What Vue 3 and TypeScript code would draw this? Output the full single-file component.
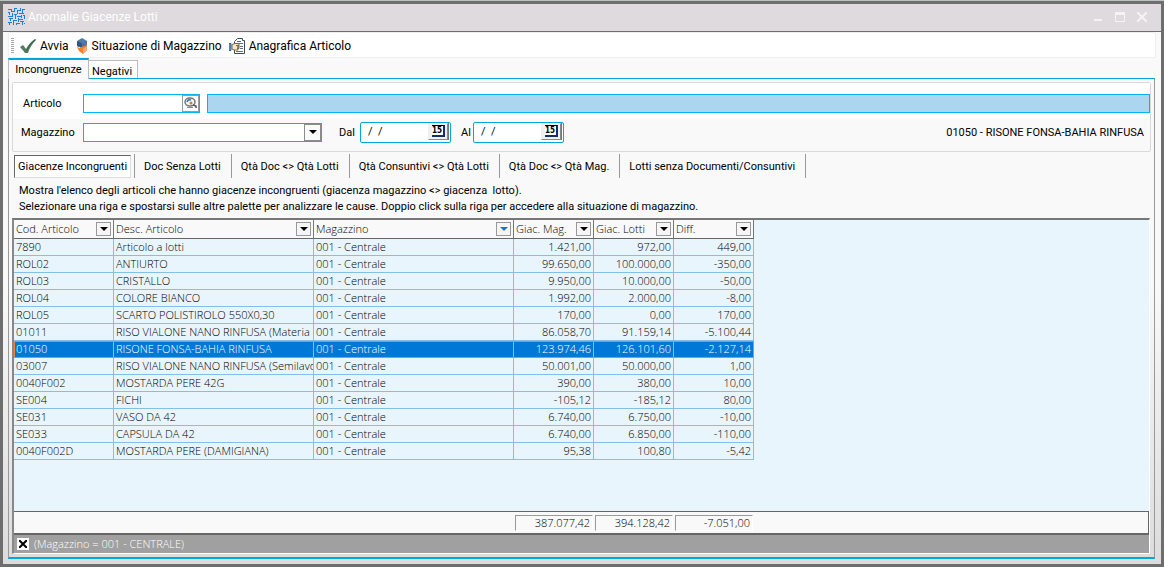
<script setup lang="ts">
import { ref } from 'vue'

interface Row {
  code: string
  desc: string
  store: string
  mag: string
  lots: string
  diff: string
}

const C = '001 - Centrale'
const make = (code: string, desc: string, mag: string, lots: string, diff: string): Row => ({ code, desc, store: C, mag, lots, diff })

const rows: Row[] = [
  make('7890', 'Articolo a lotti', '1.421,00', '972,00', '449,00'),
  make('ROL02', 'ANTIURTO', '99.650,00', '100.000,00', '-350,00'),
  make('ROL03', 'CRISTALLO', '9.950,00', '10.000,00', '-50,00'),
  make('ROL04', 'COLORE BIANCO', '1.992,00', '2.000,00', '-8,00'),
  make('ROL05', 'SCARTO POLISTIROLO 550X0,30', '170,00', '0,00', '170,00'),
  make('01011', 'RISO VIALONE NANO RINFUSA (Materia p', '86.058,70', '91.159,14', '-5.100,44'),
  make('01050', 'RISONE FONSA-BAHIA RINFUSA', '123.974,46', '126.101,60', '-2.127,14'),
  make('03007', 'RISO VIALONE NANO RINFUSA (Semilavor', '50.001,00', '50.000,00', '1,00'),
  make('0040F002', 'MOSTARDA PERE 42G', '390,00', '380,00', '10,00'),
  make('SE004', 'FICHI', '-105,12', '-185,12', '80,00'),
  make('SE031', 'VASO DA 42', '6.740,00', '6.750,00', '-10,00'),
  make('SE033', 'CAPSULA DA 42', '6.740,00', '6.850,00', '-110,00'),
  make('0040F002D', 'MOSTARDA PERE (DAMIGIANA)', '95,38', '100,80', '-5,42'),
]

const columns = [
  { label: 'Cod. Articolo', cls: 'c-code' },
  { label: 'Desc. Articolo', cls: 'c-desc' },
  { label: 'Magazzino', cls: 'c-store', filtered: true },
  { label: 'Giac. Mag.', cls: 'c-num' },
  { label: 'Giac. Lotti', cls: 'c-num' },
  { label: 'Diff.', cls: 'c-num' },
]

const subTabs = [
  'Giacenze Incongruenti',
  'Doc Senza Lotti',
  'Qtà Doc <> Qtà Lotti',
  'Qtà Consuntivi <> Qtà Lotti',
  'Qtà Doc <> Qtà Mag.',
  'Lotti senza Documenti/Consuntivi',
]

const totals = ['387.077,42', '394.128,42', '-7.051,00']
const activeSub = ref(0)
const selected = ref('01050')
const article = ref('')
const from = ref('/  /')
const to = ref('/  /')
</script>

<template>
  <div class="window">
    <header class="titlebar">
      <svg class="logo" width="17" height="17" viewBox="0 0 17 17" shape-rendering="crispEdges">
        <path d="M0 1.500h4M3.500 1v3M0 4.500h2M1.500 4v3M6 0.500h3M6.500 0v4M4 3.500h3M9 2.500h3M9.500 2v4M12.500 0v3M14 1.500h3M14.500 1v4M11 5.500h5M4.500 5v4M0 8.500h5M6 6.500h3M7.500 6v5M9 8.500h5M13.500 7v3M15 7.500h2M16.500 7v4M1 10.500h4M2.500 10v3M5 12.500h4M5.500 12v5M0 14.500h4M1.500 14v3M10.500 10v4M10 11.500h5M8 15.500h4M8.500 15v2M12 13.500h4M14.500 13v4M16 15.500h1" />
      </svg>
      <h1>Anomalie Giacenze Lotti</h1>
      <div class="win-buttons">
        <button type="button" aria-label="Riduci">
          <svg width="10" height="10" viewBox="0 0 10 10" shape-rendering="crispEdges"><path d="M1 8h8" stroke-width="2" /></svg>
        </button>
        <button type="button" aria-label="Ingrandisci">
          <svg width="10" height="10" viewBox="0 0 10 10" shape-rendering="crispEdges"><path d="M.5 1v8.5h9V1" /><path d="M0 1.5h10" stroke-width="3" /></svg>
        </button>
        <button type="button" aria-label="Chiudi">
          <svg width="10" height="10" viewBox="0 0 10 10"><path d="M0 0l10 10M10 0l-10 10" stroke-width="2" /></svg>
        </button>
      </div>
    </header>

    <div class="toolbar" role="toolbar">
      <span class="grip"></span>
      <button type="button">
        <svg width="16" height="16" viewBox="0 0 16 16"><path d="M0 9l3-2 3 4q4-7 9-10l1 1q-6 6-8 13H5Q3 12 0 9z" fill="#4f7a5d" /><path d="M15.500 1.500q-6 4-9 11" stroke="#3f6049" fill="none" /></svg>
        Avvia
      </button>
      <button type="button">
        <svg width="12" height="16" viewBox="0 0 12 16"><path d="M1 3l5-3 5 3v5l-5 2-5-2z" fill="#4a7db0" /><path d="M1 3l5 2v5L1 8z" fill="#32587f" /><path d="M1 9l3 1 3-2 4-1v5l-4 4-4-3z" fill="#f5821f" /><path d="M7 11l4-3v4l-4 4z" fill="#f9a979" /><path d="M6 5l5-2v4L6 9z" fill="#5b6f9f" /></svg>
        Situazione di Magazzino
      </button>
      <button type="button">
        <svg width="16" height="16" viewBox="0 0 16 16"><path d="M5.500 3.500l3-3h5v2h2v13h-10z" fill="#fff" stroke="#3c4a5e" /><path d="M8 3.500h4M10 5.500h4M11 8.500h3M11 10.500h3M7 13.500h7" stroke="#5a6f88" /><path d="M0 5.500h2v7H0z" fill="#6a9ccc" stroke="#39699b" /><path d="M3 6.500l3-1h4v2H7h3v1.500H8h2v1.500H8h1v1.500H5l-2-1z" fill="#f7e8c5" stroke="#77684c" /></svg>
        Anagrafica Articolo
      </button>
    </div>

    <nav class="tabs">
      <button type="button" class="tab active">Incongruenze</button>
      <button type="button" class="tab">Negativi</button>
    </nav>

    <main class="page">
      <form class="filters" @submit.prevent>
        <div class="frow first">
          <label class="lead" for="articolo">Articolo</label>
          <div class="field code">
            <input id="articolo" v-model="article" type="text" />
            <button type="button" class="lookup" aria-label="Cerca articolo">
              <svg width="14" height="12" viewBox="0 0 14 12"><ellipse cx="6" cy="5" rx="5" ry="4" fill="#f4f6f8" stroke="#70787f" stroke-width="1.500" /><path d="M3 5q1-3 4-2" stroke="#3976ad" fill="none" stroke-width="1.500" /><circle cx="7" cy="6" r="1.500" fill="#d9792c" /><path d="M9 8l3 1v2" stroke="#555" stroke-width="1.500" fill="none" /><path d="M3 10.500h6" stroke="#888" /></svg>
            </button>
          </div>
          <input class="description" type="text" readonly aria-label="Descrizione articolo" />
        </div>
        <div class="frow">
          <label class="lead" for="magazzino">Magazzino</label>
          <div class="field store">
            <select id="magazzino"><option></option></select>
            <span class="drop"></span>
          </div>
          <label class="dal" for="dal">Dal</label>
          <div class="field date">
            <input id="dal" v-model="from" type="text" />
            <button type="button" class="cal" aria-label="Calendario dal"><span>15</span></button>
          </div>
          <label class="al" for="al">Al</label>
          <div class="field date">
            <input id="al" v-model="to" type="text" />
            <button type="button" class="cal" aria-label="Calendario al"><span>15</span></button>
          </div>
          <output class="current">01050 - RISONE FONSA-BAHIA RINFUSA</output>
        </div>
      </form>

      <nav class="subtabs">
        <button v-for="(t, i) in subTabs" :key="t" type="button" :class="{ on: i === activeSub }" @click="activeSub = i"><span>{{ t }}</span></button>
      </nav>

      <div class="help">
        <p>Mostra l'elenco degli articoli che hanno giacenze incongruenti (giacenza magazzino &lt;&gt; giacenza&nbsp; lotto).</p>
        <p>Selezionare una riga e spostarsi sulle altre palette per analizzare le cause. Doppio click sulla riga per accedere alla situazione di magazzino.</p>
      </div>

      <section class="grid">
        <div class="scroll">
          <table>
            <colgroup><col v-for="c in columns" :key="c.label" :class="c.cls" /></colgroup>
            <thead>
              <tr>
                <th v-for="c in columns" :key="c.label" scope="col">
                  <div class="head">
                    <span>{{ c.label }}</span>
                    <button type="button" :class="{ filtered: c.filtered }" :aria-label="'Filtra ' + c.label"></button>
                  </div>
                </th>
              </tr>
            </thead>
            <tbody>
              <tr v-for="r in rows" :key="r.code" :class="{ selected: r.code === selected }" @click="selected = r.code">
                <td>{{ r.code }}</td>
                <td>{{ r.desc }}</td>
                <td>{{ r.store }}</td>
                <td class="num">{{ r.mag }}</td>
                <td class="num">{{ r.lots }}</td>
                <td class="num">{{ r.diff }}</td>
              </tr>
            </tbody>
          </table>
        </div>
        <div class="totals"><output v-for="t in totals" :key="t">{{ t }}</output></div>
        <div class="filterbar">
          <button type="button" aria-label="Rimuovi filtro">
            <svg width="8" height="8" viewBox="0 0 8 8"><path d="M0 0l8 8M8 0l-8 8" stroke="#000" stroke-width="2" /></svg>
          </button>
          <span>(Magazzino = 001 - CENTRALE)</span>
        </div>
      </section>
    </main>
  </div>
</template>

<style>
html,
body,
#app {
  height: 100%;
}
body {
  margin: 0;
  background: #b9c4c0;
}
</style>

<style scoped>
* {
  box-sizing: border-box;
}
.window {
  display: flex;
  flex-direction: column;
  min-height: calc(100vh - 1px);
  margin-top: 1px;
  border: 3px solid #6e6e6e;
  background: linear-gradient(#f9f9f9 50%, #dcdcdc);
  color: #000;
  font: 11px/14px Roboto, "DejaVu Sans Condensed", sans-serif;
}
button,
input,
select {
  margin: 0;
  padding: 0;
  border: 0;
  border-radius: 0;
  background: none;
  color: inherit;
  font: inherit;
  outline: 0;
}
svg {
  display: block;
  flex: none;
}
.titlebar {
  display: flex;
  align-items: center;
  height: 28px;
  padding: 0 14px 2px 5px;
  border-bottom: 1px solid #6e6e6e;
  background: #dedadd;
}
.logo path {
  fill: none;
  stroke: #1a7fe0;
  stroke-width: 1;
}
h1 {
  flex: 1;
  margin: 0 0 0 3px;
  color: #fff;
  font: 12px/16px Roboto, sans-serif;
}
.win-buttons {
  display: flex;
  gap: 12px;
}
.win-buttons path {
  fill: none;
  stroke: #f5f3f5;
}
.toolbar {
  display: flex;
  align-items: center;
  height: 26px;
  margin: 0 5px;
  padding: 1px 2px 0;
  border: 1px solid #efefef;
  border-radius: 2px;
  background: #fff;
  font-size: 12px;
}
.toolbar button {
  display: flex;
  align-items: center;
  gap: 4px;
  margin-right: 7px;
  white-space: nowrap;
}
.grip {
  width: 3px;
  height: 16px;
  margin-right: 6px;
  background: repeating-linear-gradient(#a8a8a8 0 1px, #fff 1px 2px);
}
.tabs {
  display: flex;
  align-items: flex-end;
  height: 21px;
  margin: 0 6px 0 5px;
  border-bottom: 1px solid #00a8dc;
}
.tab {
  height: 18px;
  padding: 4px 5px 0 3px;
  border: 1px solid #bbb;
  border-width: 1px 1px 0 0;
  background: #fff;
  line-height: 13px;
  white-space: nowrap;
}
.tab.active {
  height: 21px;
  width: 81px;
  margin-bottom: -1px;
  padding: 0 0 1px;
  border-top: 2px solid #00a8dc;
  border-left: 1px solid #bbb;
  background: #f9f9f9;
}
.page {
  display: flex;
  flex: 1;
  flex-direction: column;
  margin: 0 6px 5px 5px;
  padding: 3px;
  border: 1px solid #999;
  border-width: 0 1px 2px;
  border-bottom-color: #00a8dc;
}
.filters {
  border: 1px solid #d9d9d9;
  border-radius: 2px;
  background: #f9f9f9;
}
.frow {
  display: flex;
  align-items: center;
  height: 32px;
  padding: 0 6px 6px 8px;
}
.frow.first {
  height: 36px;
  padding: 4px 0 0 10px;
  background: #fff;
}
.frow label,
.current {
  padding-top: 2px;
}
.lead {
  width: 62px;
}
.first .lead {
  width: 60px;
}
.field {
  display: flex;
  height: 19px;
  border: 1px solid #00b4f5;
  background: #fff;
}
.field input {
  flex: 1;
  min-width: 0;
}
.code {
  width: 117px;
}
.lookup {
  display: grid;
  place-items: center;
  width: 17px;
  border: 1px solid #9b9b9b;
  background: #fff;
}
.description {
  flex: 1;
  height: 19px;
  margin-left: 7px;
  border: 1px solid #00b4f5;
  background: #acd5ef;
}
.store {
  width: 239px;
}
.store select {
  flex: 1;
  appearance: none;
}
.drop {
  display: grid;
  place-items: center;
  width: 17px;
  border: 1px solid #8c8c8c;
  background: #fafafa;
}
.drop::before,
.head button::before {
  content: "";
  border: 4px solid transparent;
  border-top-color: #000;
  border-bottom: 0;
}
.dal {
  width: 21px;
  margin-left: 17px;
}
.al {
  width: 12px;
  margin-left: 10px;
}
.date {
  width: 91px;
  height: 21px;
  border-color: #00a8dc;
  border-radius: 2px;
}
.date input {
  padding-left: 7px;
  white-space: pre;
}
.cal {
  width: 20px;
  height: 17px;
  margin-right: 2px;
  border: 1px solid;
  border-color: #eee #888 #888 #eee;
  background: #f0f0f0;
  box-shadow: 1px 0 #777;
}
.cal span {
  display: block;
  width: 13px;
  height: 12px;
  margin: 0 auto;
  border-top: 1px solid #000;
  border-right: 2px solid #1b2a6b;
  border-bottom: 2px solid #1b2a6b;
  background: #fff;
  font: bold 8px/9px "DejaVu Sans Condensed", sans-serif;
}
.current {
  margin-left: auto;
  white-space: nowrap;
}
.subtabs {
  display: flex;
  height: 26px;
  margin-top: 1px;
  padding-left: 2px;
}
.subtabs button {
  margin: 1px 0;
  padding: 2px 10px 0 9px;
  border-right: 1px solid #999;
  white-space: nowrap;
}
.subtabs .on {
  padding: 0 3px 0 0;
}
.on span {
  display: block;
  height: 23px;
  padding: 4px 3px 0;
  border: 1px solid;
  border-color: #666 #ddd #ddd #666;
  background: #fff;
}
.help {
  padding: 4px 7px 3px;
}
.help p {
  margin: 0;
  line-height: 16px;
}
.grid {
  display: flex;
  flex: 1;
  flex-direction: column;
  margin-right: 1px;
  border: 1px solid #fff;
  border-top: 2px solid #777;
  border-left: 2px solid #888;
  background: #e9f5fc;
  font-family: "Open Sans", "Noto Sans", sans-serif;
  font-weight: 300;
}
.scroll {
  flex: 1;
}
table {
  width: 740px;
  border-collapse: separate;
  border-spacing: 0;
  table-layout: fixed;
}
.c-code {
  width: 100px;
}
.c-desc,
.c-store {
  width: 200px;
}
.c-num {
  width: 80px;
}
th {
  height: 19px;
  padding: 1px 2px;
  border-right: 1px solid #777;
  border-bottom: 1px solid #666;
  background: #f9f9f9;
  font-weight: 300;
  text-align: left;
}
.head {
  display: flex;
  align-items: center;
  justify-content: space-between;
}
.head button {
  display: grid;
  place-items: center;
  width: 15px;
  height: 14px;
  border: 1px solid #999;
  background: #f5f5f5;
}
.head .filtered::before {
  border-top-color: #0078d7;
}
td {
  height: 17px;
  padding: 0 2px;
  border-right: 1px solid #84bfe8;
  border-bottom: 1px solid #84bfe8;
  overflow: hidden;
  line-height: 16px;
  white-space: nowrap;
}
.num {
  text-align: right;
}
.selected {
  outline: 1px solid #f58232;
  outline-offset: -1px;
}
.selected td {
  background: #0078d7;
  color: #fff;
}
.totals {
  display: flex;
  gap: 2px;
  height: 24px;
  padding: 3px 0 2px 501px;
  border: 1px solid #666;
  border-left: 0;
  border-bottom-width: 2px;
  background: #f9f9f9;
}
.totals output {
  width: 78px;
  padding: 0 2px;
  border: 1px solid #999;
  border-right-color: #fff;
  border-bottom-color: #fff;
  text-align: right;
}
.filterbar {
  display: flex;
  align-items: center;
  gap: 5px;
  height: 18px;
  padding-left: 3px;
  background: #a0a0a0;
  color: #fff;
}
.filterbar button {
  display: grid;
  place-items: center;
  width: 12px;
  height: 12px;
  background: #fff;
}
</style>
